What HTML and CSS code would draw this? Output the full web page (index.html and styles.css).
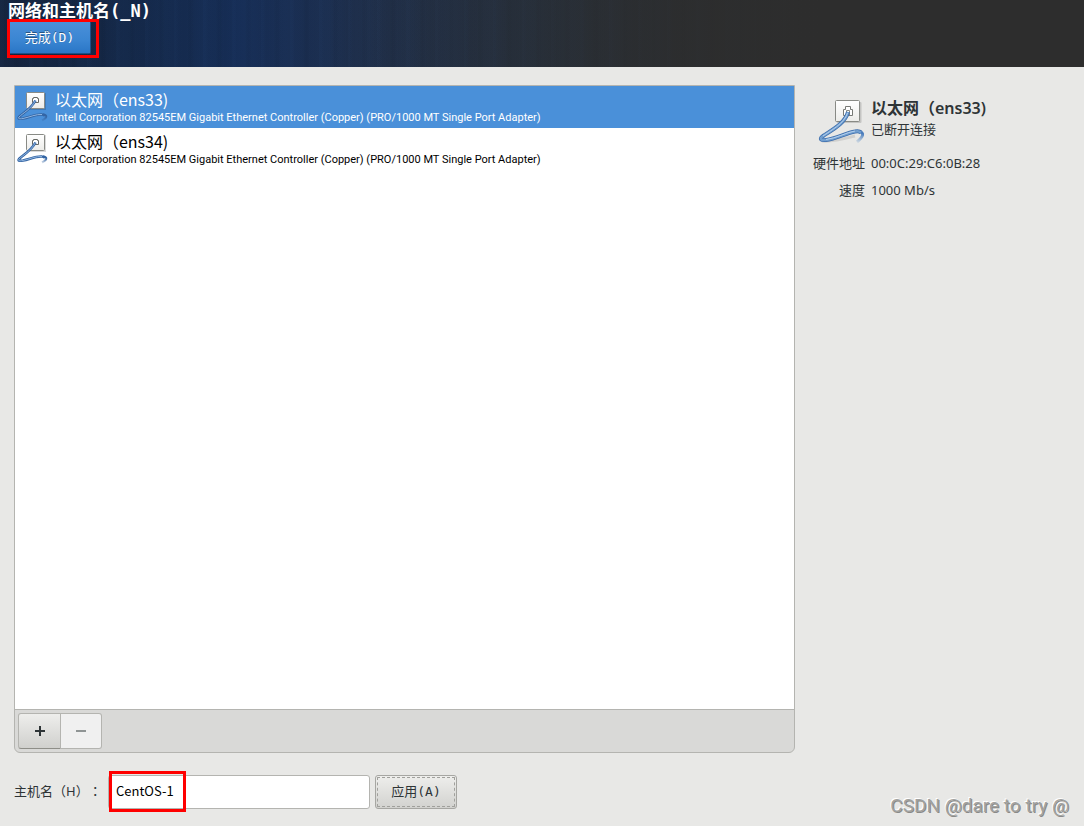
FILE: index.html
```html
<!DOCTYPE html>
<html lang="zh-CN">
<head>
<meta charset="utf-8">
<title>网络和主机名</title>
<link rel="stylesheet" href="styles.css">
</head>
<body>
<svg class="defs" aria-hidden="true">
  <defs>
    <linearGradient id="plate" x1="0" y1="0" x2="0" y2="1">
      <stop offset="0" stop-color="#ffffff"/>
      <stop offset="1" stop-color="#ecece9"/>
    </linearGradient>
    <linearGradient id="tail" gradientUnits="userSpaceOnUse" x1="44" y1="36" x2="40" y2="48">
      <stop offset="0" stop-color="#4a7dbd"/>
      <stop offset="1" stop-color="#729fcf" stop-opacity="0"/>
    </linearGradient>
    <linearGradient id="tail-small" gradientUnits="userSpaceOnUse" x1="30" y1="31" x2="27" y2="38">
      <stop offset="0" stop-color="#3465a4"/>
      <stop offset="1" stop-color="#3465a4" stop-opacity="0"/>
    </linearGradient>
    <symbol id="cable" viewBox="0 0 48 48">
      <path d="M5 44C16 45 30 41 38 39" fill="none" stroke="#000" stroke-opacity=".1" stroke-width="3"/>
      <rect x="19.5" y="5" width="25" height="21" rx="1" fill="#000" fill-opacity=".15"/>
      <rect x="18.5" y="3.5" width="24" height="21" rx="1" fill="url(#plate)" stroke="#888a85"/>
      <path d="M26.500 18.500V12.500H28.500V9.500H33.500V12.500H35.500V18.500Z" fill="#fff" stroke="#777975"/>
      <path d="M29.500 18V13.500H32.500V18" fill="none" stroke="#888a85"/>
      <path d="M42 34.500C48 36 46 40 40 45" fill="none" stroke="url(#tail)" stroke-width="3"/>
      <path d="M31 15C28 27 13 34 6 39C2 42 4 43.500 9 43C19 42 29 36 38 34.500Q42 33.500 44 35.500" fill="none" stroke="#3b6cac" stroke-width="4" stroke-linejoin="round"/>
      <path d="M31 15C28 27 13 34 6 39C2 42 4 43.500 9 43C19 42 29 36 38 34.500Q42 33.500 44 35.500" fill="none" stroke="#729fcf" stroke-width="2.500"/>
      <path d="M30.500 16C27 27 13 34 6 39M9 42.500C19 41.500 29 35.500 38 34" fill="none" stroke="#b4d0ee" stroke-width="1"/>
    </symbol>
    <symbol id="cable-small" viewBox="2 6 32 32">
      <rect x="13" y="9" width="19" height="17" fill="#000" fill-opacity=".15"/>
      <rect x="12.500" y="8.500" width="18" height="16" rx="1" fill="url(#plate)" stroke="#888a85"/>
      <path d="M18.500 18.500V14.500H19.500V13.500H23.500V14.500H24.500V18.500Z" fill="#fff" stroke="#666864"/>
      <path d="M29 30.500C34 31 33 34 28 36.500" fill="none" stroke="url(#tail-small)" stroke-width="2"/>
      <path d="M21.500 16.500C17 25 9 29 5 33C3.500 35 6 35 9 34.500C16 33 22 30 28 30.500Q30 30.500 31 32" fill="none" stroke="#3465a4" stroke-width="2.600"/>
      <path d="M21.500 16.500C17 25 9 29 5 33C3.500 35 6 35 9 34.500C16 33 22 30 28 30.500" fill="none" stroke="#8fb5e0" stroke-width="1"/>
    </symbol>
  </defs>
</svg>
<div class="screen">
  <header class="top">
    <h1 class="title">网络和主机名(_N)</h1>
    <div class="done-wrap">
      <button class="done" type="button">完成(D)</button>
      <span class="mark mark-done"></span>
    </div>
  </header>
  <main class="content">
    <div class="panes">
      <section class="devices">
        <ul class="list">
          <li class="device selected">
            <svg class="icon"><use href="#cable-small"/></svg>
            <div>
              <div class="name">以太网（ens33)</div>
              <div class="desc">Intel Corporation 82545EM Gigabit Ethernet Controller (Copper) (PRO/1000 MT Single Port Adapter)</div>
            </div>
          </li>
          <li class="device">
            <svg class="icon"><use href="#cable-small"/></svg>
            <div>
              <div class="name">以太网（ens34)</div>
              <div class="desc">Intel Corporation 82545EM Gigabit Ethernet Controller (Copper) (PRO/1000 MT Single Port Adapter)</div>
            </div>
          </li>
        </ul>
        <div class="toolbar">
          <button class="tool add" type="button" aria-label="添加"><svg width="12" height="12"><path d="M6 1V11M1 6H11" stroke="#2e3436" stroke-width="2"/></svg></button>
          <button class="tool remove" type="button" aria-label="删除" disabled><svg width="12" height="12"><path d="M1 6H11" stroke="#8f9494" stroke-width="2"/></svg></button>
        </div>
      </section>
      <aside class="details">
        <div class="summary">
          <svg class="icon-big"><use href="#cable"/></svg>
          <div>
            <h2 class="heading">以太网（ens33)</h2>
            <div class="status">已断开连接</div>
          </div>
        </div>
        <dl class="facts">
          <dt>硬件地址</dt><dd>00:0C:29:C6:0B:28</dd>
          <dt>速度</dt><dd>1000 Mb/s</dd>
        </dl>
      </aside>
    </div>
    <form class="host">
      <label class="host-label" for="hostname">主机名（H）<span class="colon" lang="zh-TW">：</span></label>
      <div class="host-field">
        <input class="entry" id="hostname" type="text" value="CentOS-1">
        <span class="mark mark-host"></span>
      </div>
      <button class="apply" type="button">应用(A)</button>
    </form>
  </main>
  <div class="watermark">CSDN @dare to try @</div>
</div>
</body>
</html>
```
FILE: styles.css
```css
* { box-sizing: border-box; }
body {
  margin: 0;
  background: #e8e8e6;
  color: #2e3436;
  font: 13px/20px "Noto Sans", "Noto Sans CJK SC", sans-serif;
  text-spacing-trim: space-all;
}
button, input { font: inherit; color: inherit; margin: 0; }
h1, h2, ul, dl, dd { margin: 0; padding: 0; }
.defs { position: absolute; width: 0; height: 0; }
.screen { position: relative; display: flex; flex-direction: column; min-height: 100vh; }

.top {
  padding: 1px 8px 13px;
  background:
    linear-gradient(90deg, transparent 30%, #2d2d2d 76%),
    repeating-linear-gradient(90deg, rgba(60, 110, 180, .03) 0 2px, transparent 5px 13px, rgba(0, 0, 0, .04) 15px 17px, transparent 20px 29px),
    repeating-linear-gradient(90deg, rgba(50, 100, 170, .04) 0, transparent 20px, rgba(50, 100, 170, .04) 41px),
    linear-gradient(90deg, #15233c 0, #142848 12%, #162d55 22%, #1d2e4c 33%, #232f3f 50%, #2a2d30 64%, #2d2d2d 76%);
}
.title, .done, .apply { font-family: "DejaVu Sans Mono", "Noto Sans CJK SC", monospace; }
.title { color: #fff; font-size: 17px; line-height: 20px; font-weight: 700; }
.done-wrap { position: relative; display: inline-block; vertical-align: top; }
.done {
  display: block;
  width: 83px;
  height: 33px;
  padding: 0;
  border: 1px solid #1c5187;
  border-top-color: #70ace5;
  border-radius: 2px;
  background: linear-gradient(#4a90d9, #3a85d2 60%, #2a76c6);
  color: #fff;
  text-shadow: 0 -1px rgba(0, 0, 0, .4);
}
.mark { position: absolute; border: 3px solid #f00; pointer-events: none; }
.mark-done { inset: -2px -8px -4px -1px; }
.mark-host { left: 1px; top: -4px; width: 77px; height: 41px; }

.content { flex: 1; display: flex; flex-direction: column; padding: 18px 14px 17px; gap: 22px; }
.panes { flex: 1; display: flex; gap: 18px; }
.devices { flex: 3; display: flex; flex-direction: column; border: 1px solid #b4b4b0; border-radius: 0 0 6px 6px; background: #d9d9d7; overflow: hidden; }
.list { flex: 1; list-style: none; background: #fff; color: #000; }
.device { display: flex; height: 42px; padding: 4px 0 0 1px; gap: 7px; }
.selected { background: #4a90d9; color: #fff; }
.icon { width: 32px; height: 32px; flex: none; }
.name { font-family: "Noto Sans CJK SC", sans-serif; font-size: 16px; line-height: 18px; }
.desc { font-family: Roboto, sans-serif; font-size: 11px; line-height: 20px; white-space: nowrap; }
.toolbar { display: flex; padding: 3px; border-top: 1px solid #b4b4b0; }
.tool { display: grid; place-items: center; width: 42px; height: 36px; padding: 0; border: 1px solid #b4b4b0; }
.add { width: 43px; border-bottom-color: #8e8e88; border-radius: 3px 0 0 3px; background: linear-gradient(#eeeeec, #d0d0cd); }
.remove { width: 41px; border-left: 0; border-radius: 0 3px 3px 0; background: #f0f0f0; }

.details { flex: 0 0 257px; padding-top: 12px; }
.summary { display: flex; gap: 6px; padding-left: 4px; }
.icon-big { width: 48px; height: 48px; flex: none; }
.heading { font-size: 16px; line-height: 22px; font-weight: 600; }
.status { line-height: 20px; }
.facts { display: grid; grid-template-columns: 52px 1fr; gap: 7px 6px; margin-top: 8px; }
.facts dt { text-align: right; }

.host { display: flex; align-items: center; }
.host-label { width: 94px; padding-bottom: 2px; white-space: nowrap; }
.colon { font-family: "Noto Sans CJK TC", sans-serif; }
.host-field { position: relative; width: 262px; }
.entry { display: block; width: 100%; height: 34px; padding: 0 7px 3px; border: 1px solid #b4b4b0; border-radius: 3px; background: #fff; color: #000; font-family: "Noto Sans CJK SC", sans-serif; }
.apply {
  width: 82px;
  height: 34px;
  margin-left: 5px;
  padding: 0;
  border: 1px solid #a6a6a2;
  border-radius: 3px;
  background: linear-gradient(#eeeeec, #d2d2cf);
  outline: 1px dashed #a0a09c;
  outline-offset: -3px;
}
.watermark {
  position: absolute;
  right: 15px;
  bottom: 8px;
  color: #a2a2a0;
  font: 19px/24px Roboto, sans-serif;
  text-shadow: 1px 1px #8a8a88, -1px -1px #fff;
}
```
